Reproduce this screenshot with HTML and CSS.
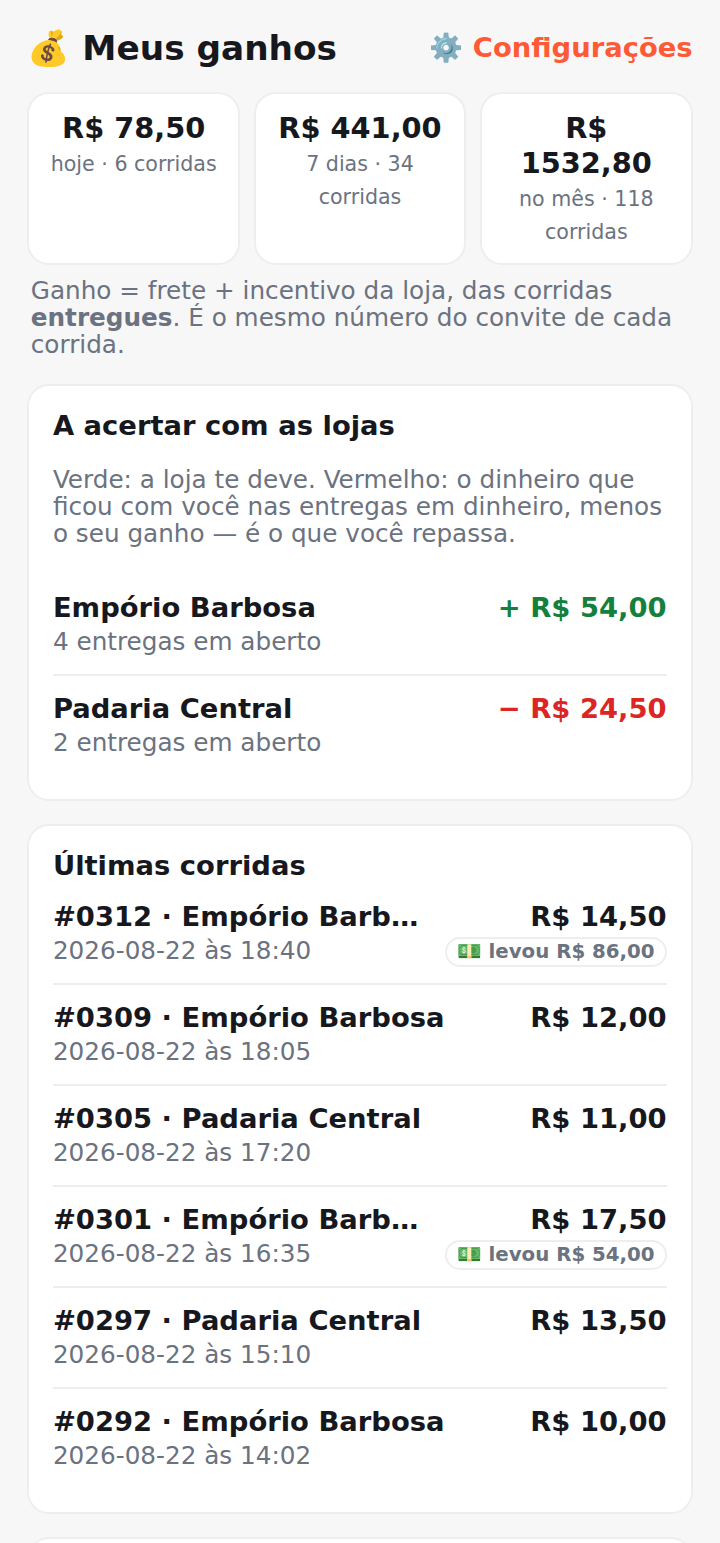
FILE: index.html
```html
<!DOCTYPE html>
<html lang="pt-BR">
<head>
    <title>Meus ganhos</title>
    <meta charset="UTF-8">
    <link rel="stylesheet" href="styles.css">
</head>
<body>
<header class="top-bar">
    <h1 class="page-title">💰 Meus ganhos</h1>
    <a href="#" class="settings-link">⚙️ Configurações</a>
</header>

<section class="stats">
    <div class="stat">
        <div class="stat-value">R$ 78,50</div>
        <div class="stat-label">hoje · 6 corridas</div>
    </div>
    <div class="stat">
        <div class="stat-value">R$ 441,00</div>
        <div class="stat-label">7 dias · 34 corridas</div>
    </div>
    <div class="stat">
        <div class="stat-value">R$ 1532,80</div>
        <div class="stat-label">no mês · 118 corridas</div>
    </div>
</section>

<p class="note">Ganho = frete + incentivo da loja, das corridas <strong>entregues</strong>. É o mesmo número do convite de cada corrida.</p>

<section class="card">
    <h2 class="card-title">A acertar com as lojas</h2>
    <p class="card-text">Verde: a loja te deve. Vermelho: o dinheiro que ficou com você nas entregas em dinheiro, menos o seu ganho — é o que você repassa.</p>
    <div class="row">
        <div class="row-main">
            <div class="row-name">Empório Barbosa</div>
            <div class="row-sub">4 entregas em aberto</div>
        </div>
        <div class="row-side"><div class="row-amount positive">+ R$ 54,00</div></div>
    </div>
    <div class="row">
        <div class="row-main">
            <div class="row-name">Padaria Central</div>
            <div class="row-sub">2 entregas em aberto</div>
        </div>
        <div class="row-side"><div class="row-amount negative">− R$ 24,50</div></div>
    </div>
</section>

<section class="card card-rides">
    <h2 class="card-title">Últimas corridas</h2>
    <div class="row">
        <div class="row-main">
            <div class="row-name">#0312 · Empório Barbosa</div>
            <div class="row-sub">2026-08-22 às 18:40</div>
        </div>
        <div class="row-side">
            <div class="row-amount">R$ 14,50</div>
            <span class="pill">💵 levou R$ 86,00</span>
        </div>
    </div>
    <div class="row">
        <div class="row-main">
            <div class="row-name">#0309 · Empório Barbosa</div>
            <div class="row-sub">2026-08-22 às 18:05</div>
        </div>
        <div class="row-side"><div class="row-amount">R$ 12,00</div></div>
    </div>
    <div class="row">
        <div class="row-main">
            <div class="row-name">#0305 · Padaria Central</div>
            <div class="row-sub">2026-08-22 às 17:20</div>
        </div>
        <div class="row-side"><div class="row-amount">R$ 11,00</div></div>
    </div>
    <div class="row">
        <div class="row-main">
            <div class="row-name">#0301 · Empório Barbosa</div>
            <div class="row-sub">2026-08-22 às 16:35</div>
        </div>
        <div class="row-side">
            <div class="row-amount">R$ 17,50</div>
            <span class="pill">💵 levou R$ 54,00</span>
        </div>
    </div>
    <div class="row">
        <div class="row-main">
            <div class="row-name">#0297 · Padaria Central</div>
            <div class="row-sub">2026-08-22 às 15:10</div>
        </div>
        <div class="row-side"><div class="row-amount">R$ 13,50</div></div>
    </div>
    <div class="row">
        <div class="row-main">
            <div class="row-name">#0292 · Empório Barbosa</div>
            <div class="row-sub">2026-08-22 às 14:02</div>
        </div>
        <div class="row-side"><div class="row-amount">R$ 10,00</div></div>
    </div>
</section>

<section class="card card-next"></section>
</body>
</html>
```

FILE: styles.css
```css
html {
    height: 100%;
    overflow: hidden;
}

body {
    font-family: 'DejaVu Sans', sans-serif;
    background: #f7f7f8;
    margin: 0;
    padding: 27.4px 27.4px 0;
    color: #16181d;
    font-size: 24.7px;
    box-sizing: border-box;
    height: 100vh;
    overflow: hidden;
}

.top-bar {
    display: flex;
    justify-content: space-between;
    align-items: center;
    height: 41px;
    margin-bottom: 24px;
}

.page-title {
    margin: 0;
    font-size: 34.3px;
    font-weight: bold;
}

.settings-link {
    color: #ff5a36;
    font-size: 27.4px;
    font-weight: bold;
    text-decoration: none;
}

.stats {
    display: grid;
    grid-template-columns: repeat(3, 1fr);
    gap: 13.7px;
}

.stat {
    background: #fff;
    border: 2px solid #eeeef0;
    border-radius: 22px;
    padding: 17px 16px 14px;
    text-align: center;
}

.stat-value {
    font-size: 28.8px;
    font-weight: bold;
    line-height: 34.6px;
    margin-bottom: 2px;
}

.stat-label {
    font-size: 20.6px;
    line-height: 33px;
    color: #6b7280;
}

.note {
    margin: 12px 0 26px;
    padding: 0 3.4px;
    font-size: 24.7px;
    line-height: 27px;
    color: #6b7280;
}

.card {
    background: #fff;
    border: 2px solid #eeeef0;
    border-radius: 22px;
    padding: 24px 24px 24px 23.5px;
    margin-bottom: 23.4px;
}

.card-title {
    margin: 0 0 24px;
    font-size: 27.4px;
    line-height: 32px;
    font-weight: bold;
}

.card-text {
    margin: 0 0 28px;
    font-size: 24.7px;
    line-height: 27px;
    color: #6b7280;
}

.row {
    display: flex;
    justify-content: space-between;
    gap: 16px;
    padding: 16px 0;
    border-bottom: 2px solid #eeeef0;
}

.row:last-child {
    border-bottom: none;
}

.row-main {
    flex: 1;
    min-width: 0;
}

.row-name {
    font-size: 27.4px;
    font-weight: bold;
    line-height: 34px;
    white-space: nowrap;
    overflow: hidden;
    text-overflow: ellipsis;
}

.row-sub {
    font-size: 24.7px;
    line-height: 33px;
    color: #6b7280;
}

.row-side {
    flex: none;
    display: flex;
    flex-direction: column;
    align-items: flex-end;
}

.row-amount {
    font-size: 27.4px;
    font-weight: bold;
    line-height: 34px;
}

.positive {
    color: #15803d;
}

.negative {
    color: #dc2626;
}

.pill {
    margin-top: 3px;
    font-size: 19.8px;
    font-weight: bold;
    line-height: 26px;
    color: #6b7280;
    border: 2px solid #eeeef0;
    border-radius: 16px;
    padding: 0 10px;
}

.card-rides .card-title {
    margin-bottom: 2px;
}

.card-next {
    height: 60px;
    margin-bottom: 0;
}
```
